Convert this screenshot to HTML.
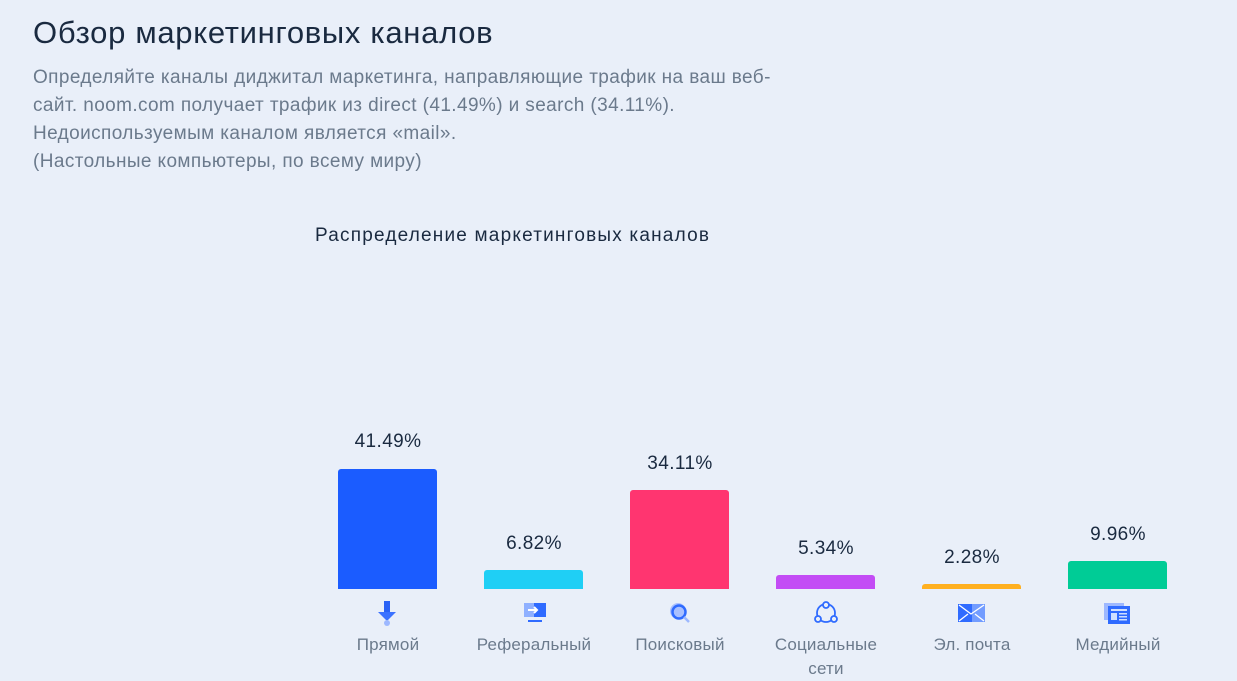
<!DOCTYPE html>
<html><head><meta charset="utf-8"><style>
body{margin:0;width:1237px;height:678px;background:#e9eff9;font-family:"Liberation Sans",sans-serif;position:relative;overflow:hidden}
h1{position:absolute;left:33px;top:15px;margin:0;font-weight:400;font-size:31px;letter-spacing:0.7px;color:#1a2a40}
.d{position:absolute;left:33px;top:64px;font-size:19px;letter-spacing:0.4px;line-height:28px;color:#6b7a8c;width:800px;white-space:nowrap}
.t{position:absolute;left:315px;top:225px;font-size:19px;letter-spacing:1.2px;color:#1a2a40}
.b{position:absolute;width:99px;bottom:89px;border-radius:3px 3px 0 0}
.v{position:absolute;width:140px;text-align:center;font-size:19px;letter-spacing:0.4px;color:#1a2a40}
.l{position:absolute;width:140px;text-align:center;font-size:17px;letter-spacing:0.2px;color:#6b7a8c;top:633px;line-height:24px}
.i{position:absolute;top:601px}
</style></head><body>
<h1>Обзор маркетинговых каналов</h1>
<div class="d">Определяйте каналы диджитал маркетинга, направляющие трафик на ваш веб-<br>сайт. noom.com получает трафик из direct (41.49%) и search (34.11%).<br>Недоиспользуемым каналом является «mail».<br>(Настольные компьютеры, по всему миру)</div>
<div class="t">Распределение маркетинговых каналов</div>

<div class="b" style="left:338px;top:469px;background:#1b5cff"></div>
<div class="b" style="left:484px;top:570px;background:#1fcff5"></div>
<div class="b" style="left:630px;top:490px;background:#ff3570"></div>
<div class="b" style="left:776px;top:575px;background:#c34cf5"></div>
<div class="b" style="left:922px;top:584px;background:#ffb020"></div>
<div class="b" style="left:1068px;top:561px;background:#00cc96"></div>

<div class="v" style="left:318px;top:431px">41.49%</div>
<div class="v" style="left:464px;top:533px">6.82%</div>
<div class="v" style="left:610px;top:453px">34.11%</div>
<div class="v" style="left:756px;top:538px">5.34%</div>
<div class="v" style="left:902px;top:547px">2.28%</div>
<div class="v" style="left:1048px;top:524px">9.96%</div>

<svg class="i" style="left:376px" width="22" height="26"><rect x="8" y="0" width="6" height="12" fill="#2a62f5"/><path d="M2 11h18l-9 9z" fill="#3b72ff"/><circle cx="11" cy="22" r="3" fill="#9db8ff"/></svg>
<svg class="i" style="left:522px" width="26" height="24"><rect x="2" y="2" width="22" height="14" fill="#2f6bff"/><rect x="2" y="2" width="10" height="14" fill="#8fb0ff"/><path d="M6 9h9M12 6l3 3-3 3" stroke="#fff" stroke-width="2" fill="none"/><rect x="6" y="19" width="14" height="2" fill="#2f6bff"/></svg>
<svg class="i" style="left:667px" width="26" height="26"><circle cx="11" cy="10" r="8" fill="#a9c0ff"/><circle cx="12" cy="11" r="6.5" fill="none" stroke="#2f6bff" stroke-width="2.5"/><path d="M17 16l5 5" stroke="#9db8ff" stroke-width="2.5"/></svg>
<svg class="i" style="left:812px" width="28" height="26"><circle cx="14" cy="12" r="9" fill="none" stroke="#2f6bff" stroke-width="1.8"/><circle cx="14" cy="4" r="3" fill="#e9eff9" stroke="#2f6bff" stroke-width="1.8"/><circle cx="6" cy="18" r="3" fill="#e9eff9" stroke="#2f6bff" stroke-width="1.8"/><circle cx="22" cy="18" r="3" fill="#e9eff9" stroke="#2f6bff" stroke-width="1.8"/></svg>
<svg class="i" style="left:958px;top:604px" width="27" height="20"><rect x="0" y="0" width="27" height="18" fill="#2f6bff"/><rect x="14" y="0" width="13" height="18" fill="#8fb0ff" opacity=".7"/><path d="M1 1l12 9 13-9M1 17l9-7M26 17l-9-7" stroke="#fff" stroke-width="1.3" fill="none"/></svg>
<svg class="i" style="left:1104px;top:603px" width="26" height="22"><rect x="0" y="0" width="20" height="17" fill="#9db8ff"/><rect x="4" y="3" width="22" height="18" fill="#2f6bff"/><rect x="7" y="6" width="16" height="2" fill="#cfe0ff"/><rect x="7" y="10" width="6" height="7" fill="#cfe0ff"/><rect x="15" y="10" width="8" height="1.5" fill="#cfe0ff"/><rect x="15" y="13" width="8" height="1.5" fill="#cfe0ff"/><rect x="15" y="16" width="8" height="1.5" fill="#cfe0ff"/></svg>

<div class="l" style="left:318px">Прямой</div>
<div class="l" style="left:464px">Реферальный</div>
<div class="l" style="left:610px">Поисковый</div>
<div class="l" style="left:756px">Социальные<br>сети</div>
<div class="l" style="left:902px">Эл. почта</div>
<div class="l" style="left:1048px">Медийный</div>
</body></html>
